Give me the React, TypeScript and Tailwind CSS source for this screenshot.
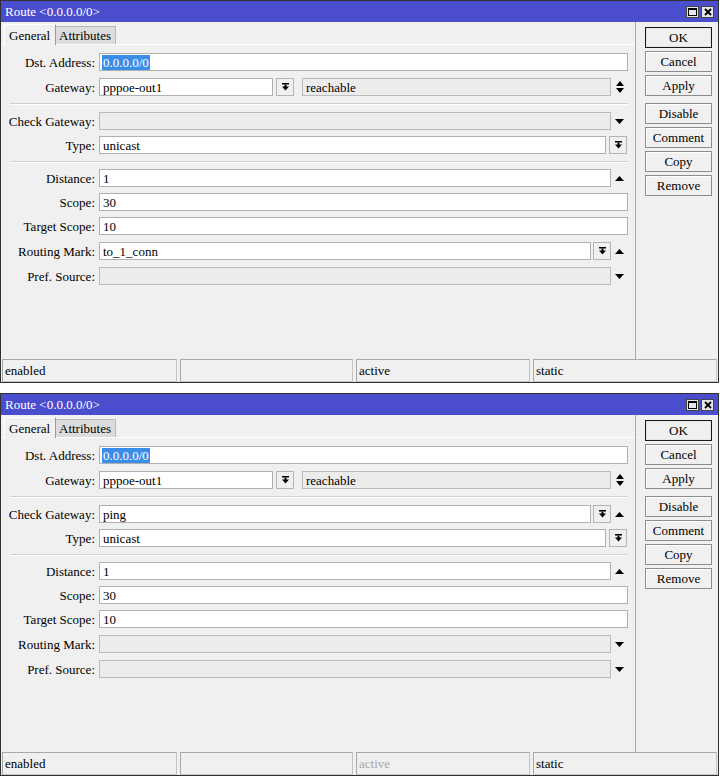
import React from "react";

function Tri({ dir }: { dir: "up" | "down" }) {
  return (
    <svg width="9" height="5" viewBox="0 0 9 5">
      {dir === "up" ? <polygon points="0,5 9,5 4.5,0" fill="#000" /> : <polygon points="0,0 9,0 4.5,5" fill="#000" />}
    </svg>
  );
}

function UpDown() {
  return (
    <svg width="8" height="12" viewBox="0 0 8 12">
      <polygon points="0,5 8,5 4,0" fill="#000" />
      <polygon points="0,7 8,7 4,12" fill="#000" />
    </svg>
  );
}

function Slot({ children }: { children?: React.ReactNode }) {
  return <div className="w-[17px] shrink-0 flex items-center justify-center">{children}</div>;
}

function DropBtn({ ml }: { ml: string }) {
  return (
    <div className={`${ml} w-[18px] h-[18px] shrink-0 border border-[#b4b4b4] bg-[#f0f0f0] flex items-center justify-center`}>
      <svg width="7" height="8" viewBox="0 0 7 8">
        <rect x="0" y="0" width="7" height="1.5" fill="#000" />
        <rect x="2.5" y="1.5" width="2" height="2.5" fill="#000" />
        <polygon points="0,3.5 7,3.5 3.5,7.5" fill="#000" />
      </svg>
    </div>
  );
}

function Field({
  value,
  disabled,
  sel,
  className,
}: {
  value?: string;
  disabled?: boolean;
  sel?: boolean;
  className?: string;
}) {
  return (
    <div
      className={`h-[18px] border flex items-center pl-[2px] overflow-hidden whitespace-nowrap ${
        disabled ? "bg-[#ececec] border-[#bcbcbc]" : "bg-white border-[#b0b0b0]"
      } ${className ?? ""}`}
    >
      {value !== undefined &&
        (sel ? (
          <span className="bg-[#3b8ee8] text-white px-[1px] leading-[15px]">{value}</span>
        ) : (
          <span className="px-[1px] leading-[15px]">{value}</span>
        ))}
    </div>
  );
}

function Row({ label, mt, children }: { label: string; mt?: string; children: React.ReactNode }) {
  return (
    <div className={`flex items-center h-[18px] pr-[7px] ${mt ?? ""}`}>
      <div className="w-[94px] shrink-0 text-right whitespace-nowrap leading-none">{label}</div>
      <div className="ml-[4px] flex-1 flex items-center">{children}</div>
    </div>
  );
}

function Sep({ mb }: { mb: string }) {
  return <div className={`mt-[7px] ${mb} ml-[9px] mr-[7px] h-[2px] border-t border-[#d0d0d0] border-b border-b-white`} />;
}

function Btn({ label, def }: { label: string; def?: boolean }) {
  return (
    <div
      className={`w-[67px] h-[21px] flex items-center justify-center bg-[#f0f0f0] border ${
        def ? "border-[#1a1a1a] shadow-[inset_0_0_0_1px_#e4e4e4]" : "border-[#8c8c8c] shadow-[inset_1px_1px_0_#ffffff]"
      } leading-none`}
    >
      {label}
    </div>
  );
}

function StatusCell({ text, w, gray }: { text: string; w?: string; gray?: boolean }) {
  return (
    <div
      className={`${w ?? "flex-1"} h-[23px] border border-[#c4c4c4] border-t-[#a8a8a8] border-l-[#a8a8a8] bg-[#f0f0f0] flex items-center pl-[2px] leading-none ${
        gray ? "text-[#a8a8a8]" : "text-black"
      }`}
    >
      {text}
    </div>
  );
}

function Win({ v }: { v: 1 | 2 }) {
  return (
    <div className="w-[719px] h-[383px] shrink-0 border border-[#303030] flex flex-col bg-[#f0f0f0]">
      <div className="h-[21px] shrink-0 bg-[#4b4ecc] flex items-center justify-between pl-[4px] pr-[4px] text-white">
        <span className="leading-none">Route &lt;0.0.0.0/0&gt;</span>
        <div className="flex gap-[2px]">
          <div className="w-[13px] h-[12px] bg-[#e6e6e6] border border-[#444] flex items-center justify-center">
            <div className="w-[9px] h-[8px] border border-black border-t-2" />
          </div>
          <div className="w-[13px] h-[12px] bg-[#e6e6e6] border border-[#444] flex items-center justify-center">
            <svg width="8" height="8" viewBox="0 0 8 8">
              <path d="M1 1 L7 7 M7 1 L1 7" stroke="#000" strokeWidth="1.8" />
            </svg>
          </div>
        </div>
      </div>
      <div className="flex-1 flex flex-col">
        <div className="h-[337px] flex">
          <div className="w-[635px] shrink-0 border-r border-[#a8a8a8] flex flex-col">
            <div className="mt-[2px] h-[21px] flex items-end pl-[3px] border-b border-white">
              <div className="w-[52px] h-[21px] border-t border-l border-white border-r border-r-[#9a9a9a] bg-[#f0f0f0] flex items-center pl-[4px] leading-none mb-[-1px] relative">
                General
              </div>
              <div className="w-[60px] h-[18px] bg-[#dcdcdc] border-t border-r border-[#b8b8b8] flex items-center pl-[3px] leading-none">
                Attributes
              </div>
            </div>
            <div className="pt-[8px] flex flex-col">
              <Row label="Dst. Address:">
                <Field value="0.0.0.0/0" sel className="flex-1" />
              </Row>
              <Row label="Gateway:" mt="mt-[7px]">
                <Field value="pppoe-out1" className="w-[174px] shrink-0" />
                <DropBtn ml="ml-[3px]" />
                <Field value="reachable" disabled className="ml-[8px] flex-1" />
                <Slot>
                  <UpDown />
                </Slot>
              </Row>
              <Sep mb="mb-[7px]" />
              {v === 1 ? (
                <Row label="Check Gateway:">
                  <Field disabled className="flex-1" />
                  <Slot>
                    <Tri dir="down" />
                  </Slot>
                </Row>
              ) : (
                <Row label="Check Gateway:">
                  <Field value="ping" className="flex-1" />
                  <DropBtn ml="ml-[2px]" />
                  <Slot>
                    <Tri dir="up" />
                  </Slot>
                </Row>
              )}
              <Row label="Type:" mt="mt-[6px]">
                <Field value="unicast" className="flex-1" />
                <DropBtn ml="ml-[3px]" />
                <div className="w-[1px]" />
              </Row>
              <Sep mb="mb-[6px]" />
              <Row label="Distance:">
                <Field value="1" className="flex-1" />
                <Slot>
                  <Tri dir="up" />
                </Slot>
              </Row>
              <Row label="Scope:" mt="mt-[6px]">
                <Field value="30" className="flex-1" />
              </Row>
              <Row label="Target Scope:" mt="mt-[6px]">
                <Field value="10" className="flex-1" />
              </Row>
              {v === 1 ? (
                <Row label="Routing Mark:" mt="mt-[7px]">
                  <Field value="to_1_conn" className="flex-1" />
                  <DropBtn ml="ml-[2px]" />
                  <Slot>
                    <Tri dir="up" />
                  </Slot>
                </Row>
              ) : (
                <Row label="Routing Mark:" mt="mt-[7px]">
                  <Field disabled className="flex-1" />
                  <Slot>
                    <Tri dir="down" />
                  </Slot>
                </Row>
              )}
              <Row label="Pref. Source:" mt="mt-[7px]">
                <Field disabled className="flex-1" />
                <Slot>
                  <Tri dir="down" />
                </Slot>
              </Row>
            </div>
          </div>
          <div className="flex-1 pt-[5px] pl-[9px] flex flex-col">
            <div className="flex flex-col gap-[3px]">
              <Btn label="OK" def />
              <Btn label="Cancel" />
              <Btn label="Apply" />
            </div>
            <div className="mt-[7px] flex flex-col gap-[3px]">
              <Btn label="Disable" />
              <Btn label="Comment" />
              <Btn label="Copy" />
              <Btn label="Remove" />
            </div>
          </div>
        </div>
        <div className="flex gap-[3px] px-[1px]">
          <StatusCell text="enabled" w="w-[175px] shrink-0" />
          <StatusCell text="" w="w-[173px] shrink-0" />
          <StatusCell text="active" w="w-[174px] shrink-0" gray={v === 2} />
          <StatusCell text="static" />
        </div>
      </div>
    </div>
  );
}

export default function App() {
  return (
    <div className="w-[720px] h-[778px] bg-white flex flex-col gap-[10px] overflow-hidden text-[13px] text-black [font-family:'Liberation_Serif','Times_New_Roman',serif]">
      <Win v={1} />
      <Win v={2} />
    </div>
  );
}
